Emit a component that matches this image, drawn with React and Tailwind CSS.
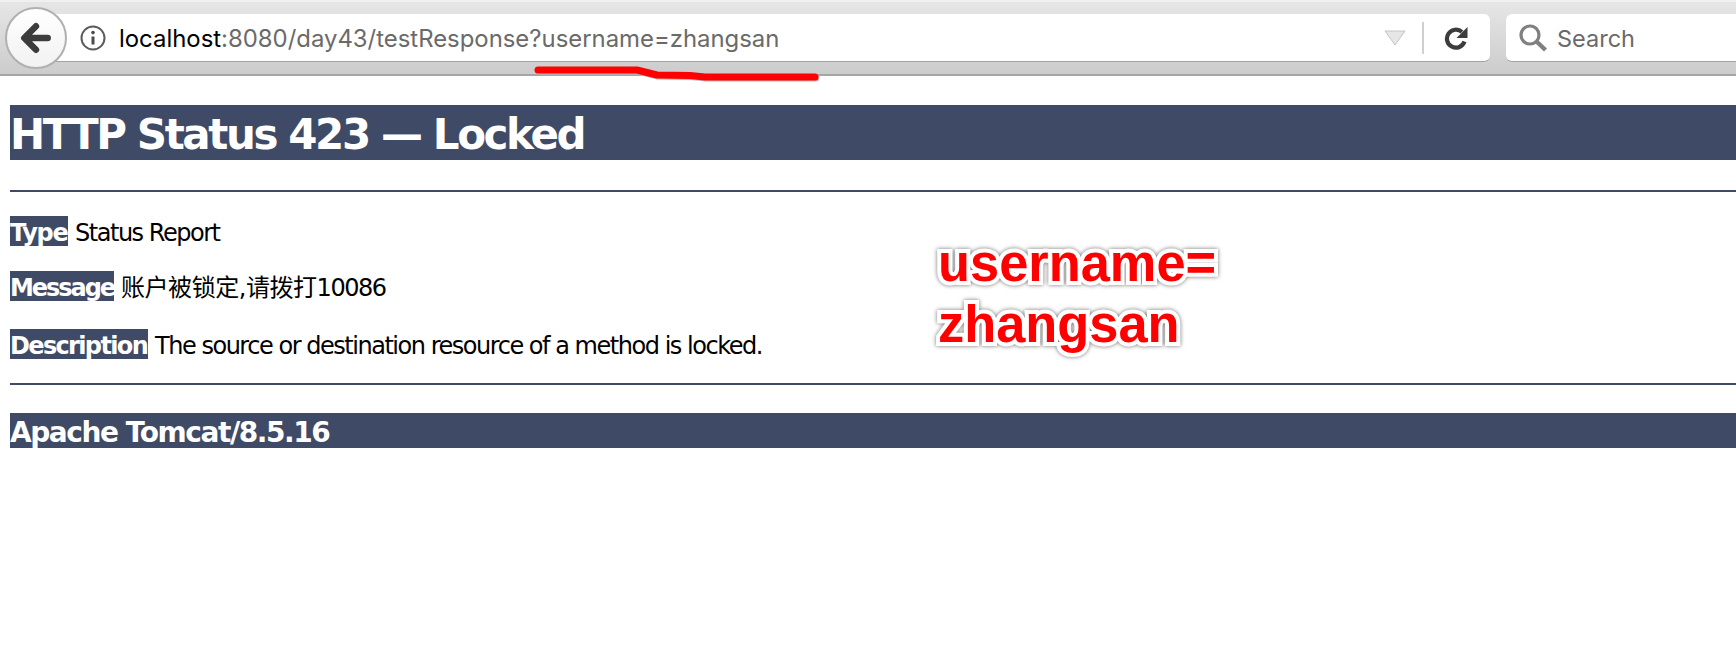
const tahoma = { fontFamily: '"DejaVu Sans", "Noto Sans CJK SC", sans-serif' }

function Label({ children, className }) {
  return <span className={`mr-[7px] inline-block h-[30px] bg-[#3f4b66] font-bold leading-[35px] text-white ${className}`}>{children}</span>
}

function Toolbar() {
  return (
    <div className="relative flex h-[76px] items-center overflow-hidden border-t-2 border-b-2 border-t-[#f0f0f0] border-b-[#a6a6a6] bg-gradient-to-b from-[#e6e6e6] to-[#cccccc]">
      <div className="z-10 ml-[5px] flex h-[62px] w-[62px] shrink-0 items-center justify-center rounded-full border-2 border-[#b0b0b0] bg-gradient-to-b from-white to-[#f2f2f2]">
        <svg width="32" height="32" viewBox="0 0 30 30" fill="none" stroke="#3c3c3c" strokeWidth="6" strokeLinecap="round" strokeLinejoin="round">
          <path d="M26 15H6M15 4L4 15l11 11" />
        </svg>
      </div>
      <div className="-ml-[15px] flex h-[48px] w-[1438px] shrink-0 items-center rounded-r-md border-b border-[#a3a3a3] bg-white pl-[27px]">
        <svg width="28" height="28" viewBox="0 0 28 28" fill="none" className="shrink-0">
          <circle cx="14" cy="14" r="11.5" stroke="#5c5c5c" strokeWidth="2" />
          <circle cx="14" cy="8.6" r="1.8" fill="#4c4c4c" />
          <path d="M14 12.5v8" stroke="#4c4c4c" strokeWidth="3" />
        </svg>
        <div className="ml-[12px] whitespace-nowrap pt-[3px] text-[23.9px] text-[#6a6a6a]" style={{ fontFamily: 'Inter, sans-serif' }}>
          <span className="text-black">localhost</span>:8080/day43/testResponse?username=zhangsan
        </div>
        <svg width="22" height="16" viewBox="0 0 22 16" className="ml-auto shrink-0">
          <path d="M1 1h20L11 15z" fill="#e6e6e6" stroke="#c4c4c4" strokeWidth="1" />
        </svg>
        <div className="ml-[16px] h-[32px] w-[2px] shrink-0 bg-[#cfcfcf]" />
        <svg width="26" height="26" viewBox="0 0 26 26" fill="none" className="mx-[20px] shrink-0">
          <path d="M20.5 16.5a9 9 0 1 1-2.5-9.5" stroke="#3c3c3c" strokeWidth="4.2" />
          <path d="M23.5 2v11h-11z" fill="#3c3c3c" />
        </svg>
      </div>
      <div className="ml-[16px] flex h-[48px] w-[400px] shrink-0 items-center rounded-l-md border-b border-[#a3a3a3] bg-white pl-[12px]">
        <svg width="30" height="30" viewBox="0 0 30 30" fill="none" stroke="#808080" className="shrink-0">
          <circle cx="12" cy="12" r="9" strokeWidth="3.2" />
          <path d="M18.5 18.5L27.5 27" strokeWidth="4.4" />
        </svg>
        <span className="ml-[9px] pt-[3px] text-[23.5px] text-[#6a6a6a]" style={{ fontFamily: 'Inter, sans-serif' }}>Search</span>
      </div>
    </div>
  )
}

export default function App() {
  return (
    <div className="relative h-[652px] w-[1736px] overflow-hidden bg-white text-black" style={tahoma}>
      <Toolbar />

      <div className="pl-[10px] pt-[29px]">
        <h1 className="h-[55px] bg-[#3f4b66] text-[42px] font-bold leading-[60px] tracking-[-2.4px] text-white whitespace-nowrap">
          HTTP Status 423 — Locked
        </h1>
        <div className="mt-[30px] h-[2px] bg-[#3f4b66]" />

        <p className="mt-[24px] h-[30px] text-[24px] leading-[35px] tracking-[-1.47px]"><Label className="w-[58px] tracking-[-1.3px]">Type</Label>Status Report</p>
        <p className="mt-[25px] h-[30px] text-[24px] leading-[35px] tracking-[-1.47px]"><Label className="w-[104px] tracking-[-2.05px]">Message</Label><span className="tracking-[-0.45px]">账户被锁定,请拨打</span>10086</p>
        <p className="mt-[28px] h-[30px] text-[24px] leading-[35px] tracking-[-1.47px]"><Label className="w-[138px] tracking-[-1.65px]">Description</Label>The source or destination resource of a method is locked.</p>

        <div className="mt-[24px] h-[2px] bg-[#3f4b66]" />
        <h3 className="mt-[28px] h-[35px] bg-[#3f4b66] text-[28px] font-bold leading-[39px] tracking-[-1.43px] text-white whitespace-nowrap">
          Apache Tomcat/8.5.16
        </h3>
      </div>

      {/* hand drawn annotations on top of the page */}
      <svg width="300" height="24" viewBox="0 0 300 24" fill="none" className="absolute left-[530px] top-[60px]">
        <path d="M8 10H107L127 15L160 15.5L175 17H285" stroke="#b9b9b9" strokeWidth="7" strokeLinecap="round" strokeLinejoin="round" transform="translate(1 1)" />
        <path d="M8 10H107L127 15L160 15.5L175 17H285" stroke="#ff0000" strokeWidth="7" strokeLinecap="round" strokeLinejoin="round" />
      </svg>
      <div
        className="absolute left-[938px] top-[233px] text-[52.4px] font-bold leading-[61px] text-[#ff0000] [-webkit-text-stroke:8px_white] [paint-order:stroke_fill] drop-shadow-[0_0_2px_rgba(0,0,0,0.55)]"
        style={{ fontFamily: '"Liberation Sans", sans-serif' }}
      >
        username=<br />zhangsan
      </div>
    </div>
  )
}
